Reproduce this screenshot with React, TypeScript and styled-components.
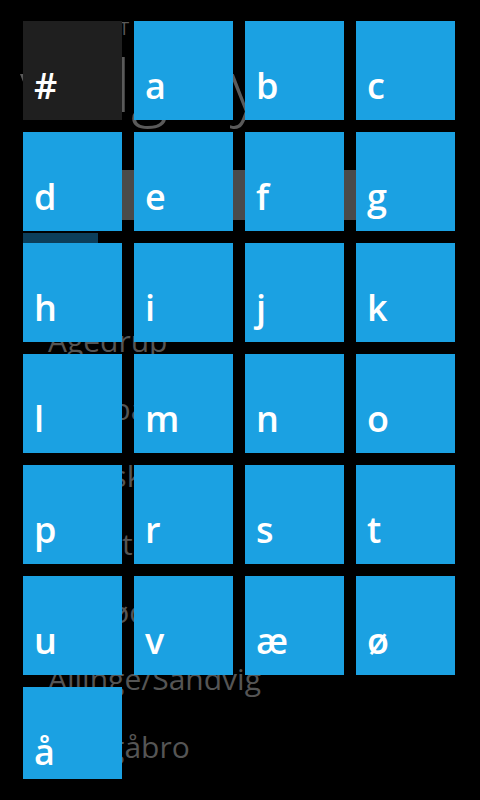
import React from "react";
import styled, { createGlobalStyle } from "styled-components";

const Global = createGlobalStyle`
  html, body { margin: 0; padding: 0; background: #000; }
  body { width: 480px; height: 800px; overflow: hidden; font-family: "Open Sans", "Noto Sans", sans-serif; }
`;

const Screen = styled.div`
  position: relative;
  width: 480px;
  height: 800px;
  background: #000;
  overflow: hidden;
`;

const Page = styled.div`
  display: flex;
  flex-direction: column;
  padding: 0 24px;
`;

const AppTitle = styled.div`
  margin-top: 16px;
  font-size: 18px;
  line-height: 24px;
  color: #5a5a5a;
  letter-spacing: 0.5px;
  white-space: nowrap;
`;

const Heading = styled.div`
  margin: 4px 0 0 -4px;
  font-size: 72px;
  font-weight: 300;
  line-height: 80px;
  color: #5a5a5a;
  white-space: nowrap;
`;

const SearchBox = styled.div`
  margin: 46px 1px 0 -1px;
  height: 50px;
  background: #4a4a4a;
`;

const Progress = styled.div`
  margin: 13px 0 0 -1px;
  width: 75px;
  height: 10px;
  background: #0c3e5a;
`;

const List = styled.div`
  margin-top: 64px;
  padding-left: 24px;
  display: flex;
  flex-direction: column;
`;

const Item = styled.div`
  height: 67.7px;
  font-size: 30px;
  font-weight: 400;
  line-height: 67.7px;
  color: #555555;
  white-space: nowrap;
`;

const Overlay = styled.div`
  position: absolute;
  top: 0;
  left: 0;
  width: 480px;
  height: 779px;
  overflow: hidden;
  box-sizing: border-box;
  padding: 21px 0 0 23px;
  display: grid;
  grid-template-columns: repeat(4, 99px);
  grid-auto-rows: 99px;
  gap: 12px;
  align-content: start;
`;

const Tile = styled.div<{ $empty?: boolean }>`
  display: flex;
  align-items: flex-end;
  box-sizing: border-box;
  padding: 0 0 16px 11px;
  background: ${(p) => (p.$empty ? "#1f1f1f" : "#1ba1e2")};
  color: #fff;
  font-family: "Open Sans", "Noto Sans", sans-serif;
  font-weight: 600;
  font-size: 36px;
  line-height: 36px;
`;

const letters = ["#", "a", "b", "c", "d", "e", "f", "g", "h", "i", "j", "k", "l", "m", "n", "o", "p", "r", "s", "t", "u", "v", "æ", "ø", "å"];

const cities = ["Agedrup", "Agerbæk", "Agerskov", "Albertslund", "Allerød", "Allinge/Sandvig", "Allingåbro"];

export default function App() {
  return (
    <Screen>
      <Global />
      <Page>
        <AppTitle>VEJRUDSIGT DANMARK</AppTitle>
        <Heading>vælg by</Heading>
        <SearchBox />
        <Progress />
        <List>
          {cities.map((c) => (
            <Item key={c}>{c}</Item>
          ))}
        </List>
      </Page>
      <Overlay>
        {letters.map((l) => (
          <Tile key={l} $empty={l === "#"}>
            {l}
          </Tile>
        ))}
      </Overlay>
    </Screen>
  );
}
